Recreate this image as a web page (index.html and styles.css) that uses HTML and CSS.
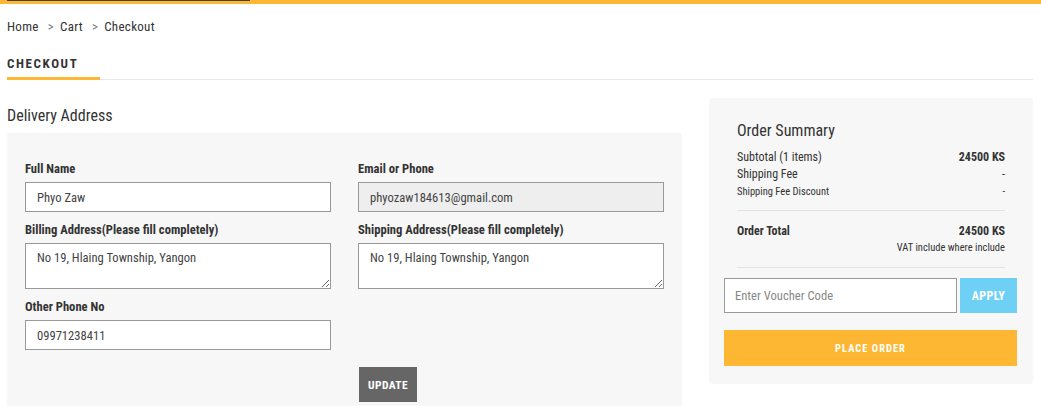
FILE: index.html
```html
<!DOCTYPE html>
<html>
<head>
    <title>Checkout</title>
    <link rel="stylesheet" href="styles.css">
</head>
<body>
    <div class="topbar"><div class="topbar-dark"></div></div>

    <div class="page">
        <div class="breadcrumb">
            <a href="#">Home</a><span class="sep">&gt;</span><a href="#">Cart</a><span class="sep">&gt;</span><span>Checkout</span>
        </div>

        <div class="page-title">
            <h2>CHECKOUT</h2>
        </div>

        <div class="checkout">
            <div class="delivery">
                <h3 class="section-title">Delivery Address</h3>
                <div class="address-box">
                    <div class="form-grid">
                        <div class="field">
                            <label>Full Name</label>
                            <input type="text" value="Phyo Zaw">
                        </div>
                        <div class="field">
                            <label>Email or Phone</label>
                            <input type="text" value="phyozaw184613@gmail.com" class="readonly" readonly>
                        </div>
                        <div class="field">
                            <label>Billing Address(Please fill completely)</label>
                            <textarea>No 19, Hlaing Township, Yangon</textarea>
                        </div>
                        <div class="field">
                            <label>Shipping Address(Please fill completely)</label>
                            <textarea>No 19, Hlaing Township, Yangon</textarea>
                        </div>
                        <div class="field">
                            <label>Other Phone No</label>
                            <input type="text" value="09971238411">
                        </div>
                        <div></div>
                        <div></div>
                        <div class="update-row">
                            <button class="btn-update">UPDATE</button>
                        </div>
                    </div>
                </div>
            </div>

            <div class="summary">
                <h3 class="section-title">Order Summary</h3>
                <div class="row"><span>Subtotal (1 items)</span><b>24500 KS</b></div>
                <div class="row"><span>Shipping Fee</span><span>-</span></div>
                <div class="row small"><span>Shipping Fee Discount</span><span>-</span></div>
                <hr class="sep-top">
                <div class="row total"><span>Order Total</span><span>24500 KS</span></div>
                <div class="vat">VAT include where include</div>
                <hr class="sep-bottom">
                <div class="voucher">
                    <input type="text" placeholder="Enter Voucher Code">
                    <button class="btn-apply">APPLY</button>
                </div>
                <button class="btn-order">PLACE ORDER</button>
            </div>
        </div>
    </div>
</body>
</html>
```

FILE: styles.css
```css
body { margin: 0; font-family: "Roboto Condensed", "Liberation Sans Narrow", Roboto, sans-serif; color: #333; background: #fff; }
a { color: #333; text-decoration: none; }

.topbar { height: 4px; background: #fdb732; }
.topbar-dark { margin-left: 7px; width: 243px; height: 1px; background: #444; }

.page { padding: 0 8px 0 7px; }

.breadcrumb { font-size: 13px; padding-top: 15px; height: 23px; letter-spacing: 0.3px; }
.breadcrumb .sep { color: #777; margin: 0 6px 0 9px; }

.page-title { margin-top: 11px; border-bottom: 1px solid #e8e8e8; }
.page-title h2 { display: inline-block; margin: 0; font-size: 13px; font-weight: 700; letter-spacing: 1.6px; padding-bottom: 6px; border-bottom: 3px solid #fdb732; width: 93px; margin-bottom: -1px; }

.checkout { display: flex; gap: 27px; margin-top: 18px; }
.delivery { width: 675px; }
.section-title { margin: 0; font-weight: 400; font-size: 16px; color: #333; }
.delivery .section-title { margin-top: 8px; height: 27px; }

.address-box { background: #f7f7f7; padding: 28px 18px 4px 18px; }
.form-grid { display: grid; grid-template-columns: 306px 306px; column-gap: 27px; row-gap: 10px; }
.field label { display: block; font-size: 12.6px; font-weight: 700; margin-bottom: 6px; }
.field input, .field textarea { display: block; box-sizing: border-box; width: 100%; border: 1px solid #999; background: #fff; font-family: inherit; font-size: 12.6px; color: #444; padding: 0 11px; margin: 0; }
.field input { height: 30px; }
.field textarea { height: 46px; padding-top: 6px; resize: vertical; }
.field input.readonly { background: #eee; }

.update-row { margin-top: 7px; }
.btn-update { display: block; background: #666; color: #fff; border: none; font-family: inherit; font-weight: 700; font-size: 11.5px; letter-spacing: 0.4px; height: 35px; width: 58px; padding: 0; margin-left: 1px; }

.summary { width: 324px; box-sizing: border-box; background: #f7f7f7; border-radius: 4px; padding: 23px 28px 18px; align-self: flex-start; font-size: 12px; }
.summary .section-title { margin-bottom: 9px; }
.summary .row { display: flex; justify-content: space-between; line-height: 17px; }
.summary .row.small { font-size: 10.5px; }
.summary hr { border: none; border-top: 1px solid #e3e3e3; }
.summary hr.sep-top { margin: 10px 0 12px; }
.summary hr.sep-bottom { margin: 12px 0 10px; }
.summary .row.total { font-weight: 700; }
.summary .vat { text-align: right; font-size: 10.5px; line-height: 15px; }
.voucher { display: flex; gap: 3px; margin: 0 -12px 0 -13px; }
.voucher input { box-sizing: border-box; flex: 1; height: 35px; border: 1px solid #999; font-family: inherit; font-size: 12.6px; padding: 0 10px; }
.voucher input::placeholder { color: #888; }
.btn-apply { width: 57px; height: 35px; background: #6fd0f5; border: none; color: #fff; font-family: inherit; font-weight: 700; font-size: 12px; letter-spacing: 0.4px; padding: 0; }
.btn-order { display: block; width: calc(100% + 25px); margin: 17px -12px 0 -13px; height: 36px; background: #fdb732; border: none; color: #fff; font-family: inherit; font-weight: 700; font-size: 10.5px; letter-spacing: 1px; }
```
